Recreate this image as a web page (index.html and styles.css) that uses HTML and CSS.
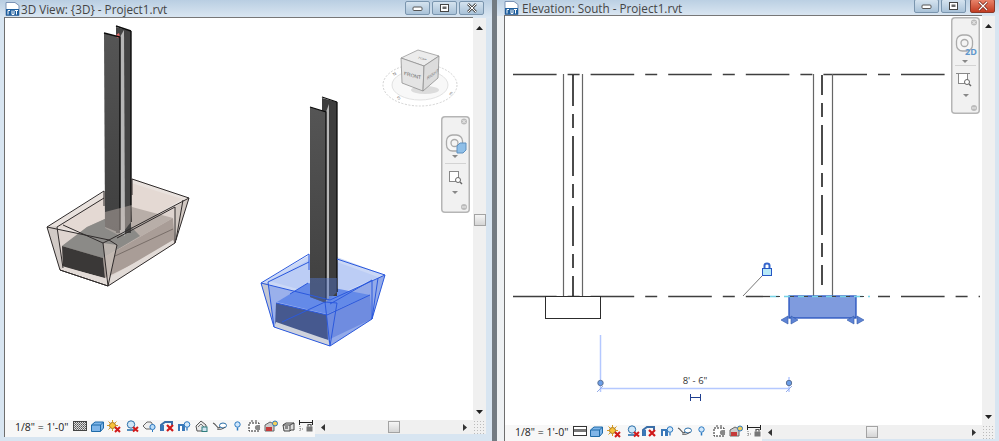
FILE: index.html
```html
<!DOCTYPE html>
<html lang="en">
<head>
<meta charset="utf-8">
<title>Revit views</title>
<link rel="stylesheet" href="styles.css">
</head>
<body>
<svg class="defs" width="0" height="0" aria-hidden="true">
  <defs>
    <linearGradient id="post" x1="0" x2="0" y1="0" y2="1"><stop offset="0" stop-color="#555"/><stop offset="1" stop-color="#3f3f3f"/></linearGradient>
    <pattern id="chk" width="2" height="2" patternUnits="userSpaceOnUse"><rect width="2" height="2" fill="#ddd"/><rect width="1" height="1" fill="#555"/><rect x="1" y="1" width="1" height="1" fill="#777"/></pattern>
    <g id="i-grid"><rect x="0.5" y="1.5" width="13" height="9" fill="url(#chk)" stroke="#444"/></g>
    <g id="i-bar"><rect x="0.5" y="1.5" width="13" height="9" fill="#fff" stroke="#333"/><rect x="1" y="4" width="12" height="3" fill="#777"/></g>
    <g id="i-cube"><path d="M0.5 5 4 2h8.5v6L9.500 11.500h-9z" fill="#7fb5e8" stroke="#1e6aa8"/><path d="M0.5 5h9l3-3M9.500 5v6.500" fill="none" stroke="#1e6aa8"/></g>
    <g id="i-sun"><circle cx="5.500" cy="5.500" r="3" fill="#f7c23c" stroke="#a8761a"/><path d="M5.500 0v2M5.500 9v2M0 5.500h2M9 5.500h2M1.500 1.500l1.500 1.500M8 8l1.500 1.500M9.500 1.500 8 3M3 8l-1.500 1.500" stroke="#d99a20"/><path d="M8 7l5 5M13 7l-5 5" stroke="#d11a1a" stroke-width="2"/></g>
    <g id="i-shadow"><circle cx="5" cy="4.500" r="3.700" fill="#cfe6f7" stroke="#2a6ea8"/><path d="M1 10h7" stroke="#1e6aa8" stroke-width="1.500"/><path d="M7 7l5 4.500M12 7l-5 4.500" stroke="#d11a1a" stroke-width="2"/></g>
    <g id="i-cloud"><path d="M1 6 5 2h4l2 3-2 4H4z" fill="#eee" stroke="#666"/><circle cx="10.500" cy="7" r="2.600" fill="#bcdcf7" stroke="#2a78c0"/><path d="M10.500 10v2" stroke="#2a78c0"/></g>
    <g id="i-redx"><path d="M1 11V5l4-3h7v3" fill="none" stroke="#3a6ea8" stroke-width="2"/><rect x="1" y="5" width="3" height="6" fill="#3a78b8"/><path d="M7 5l6 6M13 5l-6 6" stroke="#cf1818" stroke-width="2.200"/></g>
    <g id="i-blue"><rect x="1" y="4" width="7" height="7" fill="#3a78b8"/><rect x="3" y="6" width="2" height="5" fill="#fff"/><circle cx="10" cy="4.500" r="2.800" fill="#d5e9fa" stroke="#2a78c0"/><path d="M10 7.500v3" stroke="#2a78c0" stroke-width="1.300"/></g>
    <g id="i-house"><path d="M1 6 6 1l5 4v6H2z" fill="#e8e8e8" stroke="#555"/><path d="M3 7l3-3 3 3" fill="none" stroke="#777"/><rect x="7" y="7" width="5" height="4.500" fill="#cde3f0" stroke="#2e7d7d"/></g>
    <g id="i-glasses"><path d="M1 3c3 1 4 5 6 5l2-2" fill="none" stroke="#555" stroke-width="1.100"/><ellipse cx="11" cy="5.500" rx="3.500" ry="2.500" fill="#fff" stroke="#2a6ea8"/><path d="M5 9c3 1 6 0 8-2" fill="none" stroke="#555"/></g>
    <g id="i-bulb"><circle cx="3.500" cy="4.500" r="2.700" fill="#cfe6fb" stroke="#2a78c0"/><path d="M3.500 7.500v3" stroke="#2a78c0" stroke-width="1.500"/></g>
    <g id="i-crop"><rect x="1" y="3" width="10" height="8" fill="#fff" stroke="#222" stroke-dasharray="2 1"/><circle cx="9.500" cy="7.500" r="2.600" fill="#888"/><path d="M3 1h2M7 1h2" stroke="#444"/></g>
    <g id="i-house2"><path d="M1 11V5l5-3 4 2v7z" fill="#ccc" stroke="#666"/><rect x="2" y="7" width="6" height="4" fill="#c53a3a"/><circle cx="11" cy="3.500" r="2.500" fill="#f4cf5a" stroke="#2a78c0"/></g>
    <g id="i-view"><path d="M1 5l3-2h8v7H9l-1 1H2z" fill="#ddd" stroke="#444"/><path d="M1 5h7v6M8 5l4-2" fill="none" stroke="#444"/><rect x="3" y="6" width="3" height="3" fill="#888"/></g>
    <g id="i-dim"><path d="M0.500 0v5M13.500 0v5M1 2.500h12" stroke="#222"/><path d="M1 6v6M1 9h4" stroke="#777" stroke-dasharray="1 1"/><rect x="7.500" y="6.500" width="6" height="5" fill="#777"/><path d="M9 6.500V4.500h3v2" fill="none" stroke="#555" stroke-width="1.200"/></g>
    <g id="a-up"><path d="M0 4l3.500-4 3.500 4z" fill="#222"/></g>
    <g id="a-dn"><path d="M0 0l3.500 4 3.500-4z" fill="#222"/></g>
    <g id="a-dn-s"><path d="M0 0h6l-3 3z" fill="#888"/></g>
  </defs>
</svg>

<main class="desktop">
  <section class="win win-left">
    <header class="title title-left">
      <svg class="file" width="15" height="14" viewBox="0 0 15 14"><path d="M1 .5h9l4 3v10H1z" fill="#fff" stroke="#7b93b5"/><rect x="1" y="7" width="13" height="6.500" fill="#1f5f9e"/><path d="M3 8.500h2M3 8.500v4M7 8.500v4h2v-4M10 8.500h3M11.500 8.500v4" stroke="#fff" fill="none"/></svg>
      <span class="title-text">3D View: {3D} - Project1.rvt</span>
      <div class="btns">
        <span class="btn"><svg width="12" height="8" viewBox="0 0 12 8"><rect x="1" y="3" width="9" height="3.500" rx="1" fill="#fff" stroke="#555"/></svg></span>
        <span class="btn"><svg width="12" height="10" viewBox="0 0 12 10"><rect x="1.500" y="1.500" width="8" height="7" fill="#fff" stroke="#444"/><rect x="3.500" y="3.500" width="4" height="2.500" fill="#666"/></svg></span>
        <span class="btn"><svg width="12" height="10" viewBox="0 0 12 10"><path d="M2 1l8 8M10 1 2 9" stroke="#555" stroke-width="2.600"/><path d="M2 1l8 8M10 1 2 9" stroke="#fff" stroke-width="1"/></svg></span>
      </div>
    </header>
    <div class="frame frame-left">
      <div class="row-canvas">
        <div class="canvas">
          <svg class="drawing" viewBox="5 18 467 402" width="467" height="402">
            <!-- left footing: body and tinted faces -->
            <polygon points="47,227 128,177 189,198 175,243 108,286 60,270" fill="#e9e2de"/>
            <polygon points="57,227 128,182 182,199 117,238" fill="#e4d9d3"/>
            <polygon points="47,227 109,240 108,286 60,270" fill="#b5a59b" opacity=".22"/>
            <polygon points="109,240 189,198 175,243 108,286" fill="#b5a59b" opacity=".22"/>
            <!-- left footing: inner block -->
            <polygon points="62,246 87,227 132,207 173,218 103,258" fill="#b8aea8"/>
            <polygon points="62,246 87,227 118,213 140,236 103,258" fill="#8b8a87"/>
            <polygon points="103,258 173,218 175,243 105,278" fill="#a99d97"/>
            <polygon points="62,246 103,258 105,278 63,267" fill="#3a3837"/>
            <polygon points="60,270 108,286 175,243 173,240 107,279 62,266" fill="#e2dbd7"/>
            <path d="M115,256 173,229" stroke="#6c625d" stroke-width=".8"/>
            <!-- left column -->
            <polygon points="116,27 131,31 131,233 116,233" fill="#444"/>
            <polygon points="104,33 120,37 120,233 105,227" fill="url(#post)"/>
            <polygon points="120,37 124,30 125,236 120,233" fill="#b6b6b6"/>
            <polygon points="116,35 119,33 120,37 117,38" fill="#e06a6a"/>
            <path d="M104,33 120,37V230M131,31V222M116,26 131,31" fill="none" stroke="#0c0c0c" stroke-width="1.400"/>
            <polygon points="105,212 132,205 131,222 120,236 105,228" fill="#c9bdb6" opacity=".45"/>
            <!-- left footing: corners and edges -->
            <polygon points="47,227 57,226 63,268 60,270" fill="#cfc8c4" opacity=".85"/>
            <polygon points="103,243 117,245 108,286" fill="#cfc4bd" opacity=".7"/>
            <polygon points="175,207 189,198 175,243" fill="#cfc5bf" opacity=".85"/>
            <g fill="none" stroke="#2f2b2b" stroke-width="1">
              <path d="M47,227 104,191M132,179 189,198 109,240 47,227 60,270 108,286 175,243 189,198"/>
              <path d="M57,227 104,198M117,238 175,207M63,225 103,243 108,286 60,270M117,245 108,286M109,240 103,243M109,240 117,245M57,227 63,268M175,207 175,243M183,200 176,240"/>
              <path d="M132,179V195M104,191V206"/>
            </g>

            <!-- blue footing: body and tinted faces -->
            <polygon points="261,283 318,250 385,275 372,319 330,346 274,327" fill="#cbd8f6"/>
            <polygon points="269,281 318,255 378,277 330,298" fill="#bccdf5"/>
            <polygon points="261,283 330,300 330,346 274,327" fill="#3e67d8" opacity=".35"/>
            <polygon points="330,300 385,275 372,319 330,346" fill="#3e67d8" opacity=".4"/>
            <!-- blue footing: inner block -->
            <polygon points="277,302 308,283 370,295 327,314" fill="#648ae8"/>
            <polygon points="327,314 370,295 372,319 328,340" fill="#6f8ce0"/>
            <polygon points="276,303 327,315 328,340 275,327" fill="#46598f"/>
            <polygon points="274,327 330,346 328,340 276,322" fill="#cfd3dd"/>
            <polygon points="261,283 268,283 274,325" fill="#c4c7d2"/>
            <!-- blue column -->
            <polygon points="322,98 337,102 337,296 322,296" fill="#3d3d3d"/>
            <polygon points="310,107 326,112 326,303 310,297" fill="url(#post)"/>
            <polygon points="326,112 329,104 329,298 326,303" fill="#b6b6b6"/>
            <path d="M310,107 326,112V300M337,102V292M322,97 337,102" fill="none" stroke="#0c0c0c" stroke-width="1.300"/>
            <polygon points="310,278 337,278 337,292 326,303 310,297" fill="#5578cf" opacity=".45"/>
            <!-- blue footing: edges -->
            <g fill="none" stroke="#2b59dd" stroke-width="1">
              <path d="M261,283 309,254M337,259 385,275 330,300 261,283 274,327 330,346 372,319 385,275"/>
              <path d="M268,282 309,262M330,304 372,280M268,282 274,327M378,278 372,319M325,302 330,346M337,303 330,346M325,302 337,303M276,303 327,315 370,295M290,294 308,283M282,322 325,302M372,280 372,319"/>
              <path d="M309,254V270"/>
            </g>

            <!-- view cube -->
            <g class="cube">
              <ellipse cx="420" cy="85" rx="37" ry="21" fill="none" stroke="#d2d2d2" stroke-dasharray="2 1.500" stroke-width="1"/>
              <ellipse cx="420" cy="85" rx="28" ry="15" fill="#f8f8f8" stroke="#e2e2e2"/>
              <ellipse cx="425" cy="90" rx="14" ry="4" fill="#dcdcdc"/>
              <polygon points="401,58 418,50 439,56 424,66" fill="#ececec" stroke="#9a9a9a" stroke-width=".8"/>
              <polygon points="401,58 424,66 423,91 402,83" fill="#e4e4e4" stroke="#8f8f8f" stroke-width=".8"/>
              <polygon points="424,66 439,56 438,78 423,91" fill="#dcdcdc" stroke="#8f8f8f" stroke-width=".8"/>
              <text class="cube-t" transform="matrix(1 .25 0 1 404 75)">FRONT</text>
              <text class="cube-s" transform="matrix(.85 -.6 0 1 427 80)">RIGHT</text>
              <text class="cube-s" transform="matrix(.9 .3 -.6 .4 417 58)">TOP</text>
              <text class="cube-s" transform="rotate(-35 394 76)" x="394" y="76">N</text>
              <text class="cube-s" transform="rotate(35 449 94)" x="449" y="94">E</text>
              <text class="cube-s" transform="rotate(-25 398 100)" x="398" y="100">S</text>
            </g>
          </svg>
          <div class="nav nav-left">
            <svg width="29" height="97" viewBox="0 0 29 97">
              <circle cx="23" cy="5.500" r="3" fill="#bbb"/><path d="M21.500 4l3 3M24.500 4l-3 3" stroke="#eee"/>
              <rect x="5.500" y="19" width="16" height="16" rx="6" fill="#f6f6f6" stroke="#aaa" stroke-width="1.300"/><circle cx="13.500" cy="27" r="3.500" fill="#f4f4f4" stroke="#aaa" stroke-width="1.300"/>
              <path d="M16 30l3-3h6v7l-3 3h-6z" fill="#8fbfe8" stroke="#5e91c0"/>
              <use href="#a-dn-s" x="11" y="39"/>
              <path d="M4 47.500h21" stroke="#d3d3d3"/>
              <rect x="8.500" y="55.500" width="9" height="10" fill="#fff" stroke="#888"/><circle cx="17" cy="64" r="2.500" fill="#fff" stroke="#666"/><path d="M19 66l2 2" stroke="#666" stroke-width="1.400"/>
              <use href="#a-dn-s" x="11" y="75"/>
              <circle cx="23" cy="91" r="3" fill="#bbb"/><path d="M21 91h4" stroke="#eee"/>
            </svg>
          </div>
        </div>
        <aside class="vscroll">
          <svg width="7" height="4" viewBox="0 0 7 4"><use href="#a-up"/></svg>
          <span class="thumb"></span>
          <svg width="7" height="4" viewBox="0 0 7 4"><use href="#a-dn"/></svg>
        </aside>
      </div>
      <footer class="row-status">
        <div class="status status-left">
          <span class="scale">1/8" = 1'-0"</span>
          <svg width="16" height="14" viewBox="0 0 16 14"><use href="#i-grid"/></svg>
          <svg width="14" height="14" viewBox="0 0 14 14"><use href="#i-cube"/></svg>
          <svg width="17" height="14" viewBox="0 0 17 14"><use href="#i-sun"/></svg>
          <svg width="14" height="14" viewBox="0 0 14 14"><use href="#i-shadow"/></svg>
          <svg width="16" height="14" viewBox="0 0 16 14"><use href="#i-cloud"/></svg>
          <svg width="15" height="14" viewBox="0 0 15 14"><use href="#i-redx"/></svg>
          <svg width="16" height="14" viewBox="0 0 16 14"><use href="#i-blue"/></svg>
          <svg width="15" height="14" viewBox="0 0 15 14"><use href="#i-house"/></svg>
          <svg width="20" height="14" viewBox="0 0 20 14"><use href="#i-glasses"/></svg>
          <svg width="12" height="14" viewBox="0 0 12 14"><use href="#i-bulb"/></svg>
          <svg width="14" height="14" viewBox="0 0 14 14"><use href="#i-crop"/></svg>
          <svg width="16" height="14" viewBox="0 0 16 14"><use href="#i-house2"/></svg>
          <svg width="15" height="14" viewBox="0 0 15 14"><use href="#i-view"/></svg>
          <svg width="15" height="14" viewBox="0 0 15 14"><use href="#i-dim"/></svg>
        </div>
        <div class="hscroll">
          <svg width="4" height="7" viewBox="0 0 4 7"><path d="M4 0 0 3.500 4 7z" fill="#333"/></svg>
          <span class="thumb"></span>
          <svg width="4" height="7" viewBox="0 0 4 7"><path d="M0 0l4 3.500L0 7z" fill="#333"/></svg>
        </div>
        <div class="grip"></div>
      </footer>
    </div>
  </section>

  <section class="win win-right">
    <header class="title title-right">
      <svg class="file" width="15" height="14" viewBox="0 0 15 14"><path d="M1 .5h9l4 3v10H1z" fill="#fff" stroke="#7b93b5"/><rect x="1" y="7" width="13" height="6.500" fill="#1f5f9e"/><path d="M3 8.500h2M3 8.500v4M7 8.500v4h2v-4M10 8.500h3M11.500 8.500v4" stroke="#fff" fill="none"/></svg>
      <span class="title-text">Elevation: South - Project1.rvt</span>
      <div class="btns">
        <span class="btn"><svg width="12" height="8" viewBox="0 0 12 8"><rect x="1" y="3" width="9" height="3.500" rx="1" fill="#fff" stroke="#555"/></svg></span>
        <span class="btn"><svg width="12" height="10" viewBox="0 0 12 10"><rect x="1.500" y="1.500" width="8" height="7" fill="#fff" stroke="#444"/><rect x="3.500" y="3.500" width="4" height="2.500" fill="#666"/></svg></span>
        <span class="btn btn-close"><svg width="12" height="10" viewBox="0 0 12 10"><path d="M2 1l8 8M10 1 2 9" stroke="#6d1d10" stroke-width="2.600"/><path d="M2 1l8 8M10 1 2 9" stroke="#fff" stroke-width="1.200"/></svg></span>
      </div>
    </header>
    <div class="frame frame-right">
      <div class="row-canvas">
        <div class="canvas">
          <svg class="drawing" viewBox="505 16 477 409" width="477" height="409">
            <!-- levels -->
            <path class="level" d="M513,74.500H980"/>
            <path class="level" d="M513,296.500H770"/>
            <path class="level" d="M870,296.500H980" stroke-dashoffset="46.600"/>
            <!-- left column -->
            <rect x="545.500" y="296.500" width="55" height="22" fill="#fff" stroke="#2c2c2c"/>
            <path d="M563.500,74V296M582.500,74V296" stroke="#666" stroke-width="1.200"/>
            <path class="center" d="M573,296V75" stroke-dashoffset="20"/>
            <!-- right column -->
            <path d="M813.500,74V296M832.500,74V296" stroke="#666" stroke-width="1.200"/>
            <path class="center" d="M822,285V75" stroke-dashoffset="20"/>
            <!-- selected footing -->
            <rect x="789" y="296" width="67" height="22" fill="#7f9bde" stroke="#2450bd" stroke-width="1.300"/>
            <path d="M770,296.500H870" stroke="#76d3e6" stroke-width="1.500" stroke-dasharray="9 5"/>
            <path d="M770,296.500H870" stroke="#444" stroke-width="1.200" stroke-dasharray="4 10" stroke-dashoffset="-6"/>
            <g fill="#5e83d4" stroke="#2f57a8" stroke-width=".6">
              <path d="M781,320 788,316V324z"/><path d="M798,320 791,316V324z"/>
              <path d="M847,320 854,316V324z"/><path d="M864,320 857,316V324z"/>
            </g>
            <!-- lock and leader -->
            <path d="M762,276 743,296" stroke="#777"/>
            <path d="M764.500,268v-2.500q0-2 2.500-2t2.500 2v2.500" fill="none" stroke="#3566cc" stroke-width="2"/>
            <rect x="762.500" y="268.500" width="9" height="7" fill="#b7e9f7" stroke="#2656c4"/>
            <!-- dimension -->
            <path d="M600.500,335V392" stroke="#b4c8ff" stroke-width="1.500"/>
            <path d="M789,377V392" stroke="#b4c8ff" stroke-width="1.500"/>
            <path d="M600,388.500H789" stroke="#b4c8ff" stroke-width="1.500"/>
            <path d="M597,392 603,386M786,392 792,386" stroke="#93abe8"/>
            <circle cx="600.500" cy="383" r="2.700" fill="#6b9ee8" stroke="#5f7396"/>
            <circle cx="789" cy="383" r="2.700" fill="#6b9ee8" stroke="#5f7396"/>
            <text class="dim" x="695" y="384" text-anchor="middle">8' - 6"</text>
            <path d="M690.500,394V401M700.500,394V401M690,397.500H701" stroke="#1f3f8f"/>
          </svg>
          <div class="nav nav-right">
            <svg width="29" height="97" viewBox="0 0 29 97">
              <circle cx="23" cy="5.500" r="3" fill="#bbb"/><path d="M21.500 4l3 3M24.500 4l-3 3" stroke="#eee"/>
              <rect x="5.500" y="18" width="16" height="16" rx="6" fill="#f6f6f6" stroke="#aaa" stroke-width="1.300"/><circle cx="13.500" cy="26" r="3.500" fill="#f4f4f4" stroke="#aaa" stroke-width="1.300"/>
              <text class="two-d" x="14" y="38">2D</text>
              <use href="#a-dn-s" x="11" y="43"/>
              <path d="M4 48.500h21" stroke="#d3d3d3"/>
              <rect x="7.500" y="56.500" width="9" height="10" fill="#fff" stroke="#888"/><path d="M5 56.500h14" stroke="#888"/><circle cx="16" cy="65" r="2.500" fill="#fff" stroke="#666"/><path d="M18 67l2 2" stroke="#666" stroke-width="1.400"/>
              <use href="#a-dn-s" x="12" y="77"/>
              <circle cx="23" cy="91" r="3" fill="#bbb"/><path d="M21 91h4" stroke="#eee"/>
            </svg>
          </div>
        </div>
        <aside class="vscroll">
          <svg width="7" height="4" viewBox="0 0 7 4"><use href="#a-up"/></svg>
          <svg width="7" height="4" viewBox="0 0 7 4"><use href="#a-dn"/></svg>
        </aside>
      </div>
      <footer class="row-status">
        <div class="status status-right">
          <span class="scale">1/8" = 1'-0"</span>
          <svg width="15" height="14" viewBox="0 0 15 14"><use href="#i-bar"/></svg>
          <svg width="15" height="14" viewBox="0 0 15 14"><use href="#i-cube"/></svg>
          <svg width="18" height="14" viewBox="0 0 18 14"><use href="#i-sun"/></svg>
          <svg width="13" height="14" viewBox="0 0 13 14"><use href="#i-shadow"/></svg>
          <svg width="16" height="14" viewBox="0 0 16 14"><use href="#i-redx"/></svg>
          <svg width="15" height="14" viewBox="0 0 15 14"><use href="#i-blue"/></svg>
          <svg width="19" height="14" viewBox="0 0 19 14"><use href="#i-glasses"/></svg>
          <svg width="13" height="14" viewBox="0 0 13 14"><use href="#i-bulb"/></svg>
          <svg width="14" height="14" viewBox="0 0 14 14"><use href="#i-crop"/></svg>
          <svg width="16" height="14" viewBox="0 0 16 14"><use href="#i-house2"/></svg>
          <svg width="15" height="14" viewBox="0 0 15 14"><use href="#i-dim"/></svg>
        </div>
        <div class="hscroll">
          <svg width="4" height="7" viewBox="0 0 4 7"><path d="M4 0 0 3.500 4 7z" fill="#333"/></svg>
          <span class="thumb"></span>
          <svg width="4" height="7" viewBox="0 0 4 7"><path d="M0 0l4 3.500L0 7z" fill="#333"/></svg>
        </div>
        <div class="grip"></div>
      </footer>
    </div>
  </section>
</main>
</body>
</html>
```
FILE: styles.css
```css
* { box-sizing: border-box; }
html, body { margin: 0; height: 100%; overflow: hidden; background: #d8e5f1; }
.defs { position: absolute; }
.desktop { display: flex; width: 999px; height: 441px; overflow: hidden; font-family: "Open Sans", "Noto Sans", sans-serif; color: #3a3a3a; }

.win { display: flex; flex-direction: column; height: 441px; background: #d8e5f1; }
.win-left { width: 497px; border-right: 5px solid #737b82; }
.win-right { width: 502px; }

.title { display: flex; align-items: flex-start; flex: none; background: linear-gradient(#b9cee2, #dbe7f2); }
.title-left { height: 18px; padding: 1px 8px 0 5px; }
.title-right { height: 17px; margin-top: -1px; padding: 0 4px 0 7px; }
.title-left .file { margin-top: 1px; }
.title-right .file { margin-top: 2px; }
.title-text { margin-left: 1px; font-size: 11.700px; line-height: 16px; color: #444; white-space: nowrap; }
.title-right .title-text { margin-top: 1px; margin-left: 3px; line-height: 17px; }

.btns { display: flex; gap: 2px; margin-left: auto; }
.btn { display: flex; align-items: center; justify-content: center; width: 25px; height: 14px; border: 1px solid #7a95ae; border-radius: 2px; background: linear-gradient(#d5e3ef, #a9c2d8); }
.btn-close { margin-left: 2px; background: linear-gradient(#e8836a, #c33c22); border-color: #8c3a2a; }

.frame { display: flex; flex-direction: column; flex: 1; min-height: 0; }
.frame-left { padding: 0 6px 4px 4px; }
.frame-right { padding: 0 4px 0 7px; background: linear-gradient(90deg, #eef1f3, #d8e5f1 60%); }
.row-canvas { display: flex; flex: 1; min-height: 0; }
.canvas { position: relative; flex: 1; min-width: 0; margin-top: -1px; background: #fff; border-left: 1px solid #6e6e6e; border-top: 1px solid #777; overflow: hidden; }
.drawing { display: block; }
.level { fill: none; stroke: #3f3f3f; stroke-width: 1.300; stroke-dasharray: 43.600 11 12 11; }
.center { fill: none; stroke: #111; stroke-width: 1.500; stroke-dasharray: 40 8 14 8; }
.dim { font-size: 9.500px; fill: #333; font-family: "Open Sans", sans-serif; }
.cube-t { font-size: 5px; fill: #666; font-family: "Liberation Sans", sans-serif; }
.cube-s { font-size: 4.500px; fill: #777; font-family: "Liberation Sans", sans-serif; }
.two-d { font-size: 9px; font-weight: 700; fill: #5f97cc; font-family: "Open Sans", sans-serif; }

.nav { position: absolute; width: 29px; height: 97px; background: #f1f1f1; border-radius: 4px; box-shadow: inset 0 0 0 1.500px #b5b5b5; }
.nav svg { display: block; }
.nav-left { top: 98px; left: 436px; }
.nav-right { top: 1px; left: 446px; }

.vscroll { display: flex; flex-direction: column; align-items: center; justify-content: space-between; flex: none; width: 13px; padding: 8px 0 6px; background: #f0f0f0; }
.hscroll { display: flex; align-items: center; justify-content: space-between; flex: 1; height: 14px; padding: 0 6px; background: #f0f0f0; }
.thumb { display: block; width: 12px; height: 12px; border: 1px solid #a3a3a3; background: linear-gradient(#f5f5f5, #d5d5d5); }

.row-status { display: flex; flex: none; height: 17px; }
.win-right .row-status { height: 16px; }
.status { display: flex; align-items: flex-start; gap: 2px; flex: none; padding-left: 10px; background: #f7f7f7; border-left: 1px solid #6e6e6e; }
.status svg { display: block; flex: none; }
.status-left { width: 311px; }
.status-right { width: 258px; }
.scale { width: 56px; font-size: 10.500px; line-height: 15px; color: #222; white-space: nowrap; }
.grip { flex: none; width: 13px; height: 14px; background: radial-gradient(circle, #bbb 0.600px, transparent 0.800px) 0 0 / 3px 3px, #f0f0f0; }
```
